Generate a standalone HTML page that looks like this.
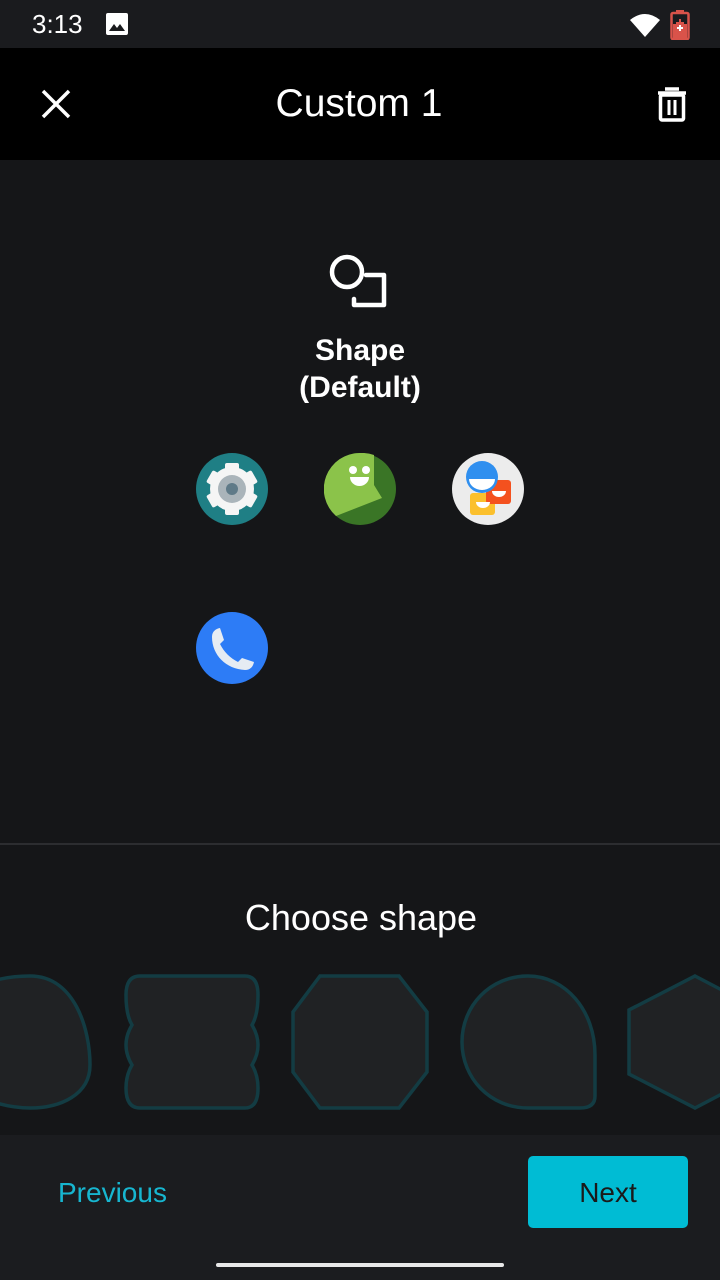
<!DOCTYPE html>
<html><head><meta charset="utf-8"><style>
html,body{margin:0;padding:0;width:720px;height:1280px;overflow:hidden;background:#151618;font-family:"Liberation Sans",sans-serif;color:#fff}
.abs{position:absolute}
</style></head><body>
<div class="abs" style="left:0;top:0;width:720px;height:48px;background:#1a1b1e"></div>
<div class="abs" style="left:32px;top:9px;font-size:26px;">3:13</div>
<svg class="abs" style="left:105px;top:12px" width="24" height="24" viewBox="0 0 24 24"><rect x="1" y="1" width="22" height="22" rx="2" fill="#fff"/><path d="M4 19 L9 12 L12 16 L15 12 L20 19Z" fill="#1a1b1e"/></svg>
<svg class="abs" style="left:628px;top:12px" width="34" height="26" viewBox="0 0 34 26"><path d="M2 8 Q17 -4 32 8 L17 25Z" fill="#fff"/></svg>
<svg class="abs" style="left:670px;top:10px" width="20" height="30" viewBox="0 0 20 30"><rect x="6" y="0" width="8" height="3" fill="#d9534a"/><rect x="1.5" y="3" width="17" height="26" rx="1.5" fill="none" stroke="#d9534a" stroke-width="2.5"/><rect x="3" y="14" width="14" height="14" fill="#d9534a"/><path d="M10 9v8M6 13h8" stroke="#d9534a" stroke-width="2"/><path d="M10 15v6M7 18h6" stroke="#fff" stroke-width="2"/></svg>
<div class="abs" style="left:0;top:48px;width:720px;height:112px;background:#000"></div>
<svg class="abs" style="left:40px;top:88px" width="32" height="32" viewBox="0 0 32 32"><path d="M3 3L29 29M29 3L3 29" stroke="#fff" stroke-width="3.5"/></svg>
<div class="abs" style="left:0;top:82px;width:718px;text-align:center;font-size:39px;">Custom 1</div>
<svg class="abs" style="left:655px;top:86px" width="34" height="36" viewBox="0 0 34 36"><path d="M10 3h14M3 7h28" stroke="#fff" stroke-width="3.5"/><rect x="5.5" y="9" width="23" height="25" rx="1.5" fill="none" stroke="#fff" stroke-width="3.5"/><path d="M14 14v15M20 14v15" stroke="#fff" stroke-width="3"/></svg>
<svg class="abs" style="left:326px;top:252px" width="64" height="58" viewBox="0 0 64 58"><circle cx="21" cy="20" r="15" fill="none" stroke="#fff" stroke-width="4.5"/><path d="M40 23h18v30h-30v-6" fill="none" stroke="#fff" stroke-width="4.5" stroke-linecap="round" stroke-linejoin="round"/></svg>
<div class="abs" style="left:0;top:332px;width:720px;text-align:center;font-size:30px;font-weight:bold;line-height:37px">Shape<br>(Default)</div>
<svg class="abs" style="left:196px;top:453px" width="72" height="72" viewBox="0 0 72 72"><circle cx="36" cy="36" r="36" fill="#1f7f85"/><g fill="#f5f5f5"><circle cx="36" cy="36" r="22"/></g><g fill="#f5f5f5">
<rect x="29" y="10" width="14" height="52" rx="2"/><rect x="29" y="10" width="14" height="52" rx="2" transform="rotate(60 36 36)"/><rect x="29" y="10" width="14" height="52" rx="2" transform="rotate(120 36 36)"/></g><circle cx="36" cy="36" r="14" fill="#aab4ba"/><circle cx="36" cy="36" r="6" fill="#5f7a88"/></svg>
<svg class="abs" style="left:324px;top:453px" width="72" height="72" viewBox="0 0 72 72"><circle cx="36" cy="36" r="36" fill="#3a7526"/><path d="M36 0 A36 36 0 0 0 12 63 L58 45 L50 32 L50 2 A36 36 0 0 0 36 0Z" fill="#8bc34a"/><circle cx="29" cy="17" r="4" fill="#fff"/><circle cx="42" cy="17" r="4" fill="#fff"/><path d="M26 24 h19 a9.5 9 0 0 1 -19 0Z" fill="#fff"/></svg>
<svg class="abs" style="left:452px;top:453px" width="72" height="72" viewBox="0 0 72 72"><circle cx="36" cy="36" r="36" fill="#ececec"/><rect x="18" y="40" width="25" height="22" rx="3" fill="#fbc02d"/><rect x="34" y="27" width="25" height="24" rx="3" fill="#f4511e"/><path d="M40 38h14a7 6 0 0 1-14 0z" fill="#fff"/><path d="M24 49h14a7 6 0 0 1-14 0z" fill="#fff"/><circle cx="30" cy="24" r="16" fill="#2f8fef"/><path d="M17 26h26a13 11 0 0 1-26 0z" fill="#fff"/></svg>
<svg class="abs" style="left:196px;top:612px" width="72" height="72" viewBox="0 0 72 72"><circle cx="36" cy="36" r="36" fill="#2d7cf6"/><path d="M16 25 C16 20 19 17 24 16 L28 28 L24 32 C28 40 34 46 42 50 L46 46 L58 50 C57 55 54 58 49 58 C30 57 16 43 16 25Z" fill="#e6ecf3"/></svg>
<div class="abs" style="left:0;top:843px;width:720px;height:2px;background:#2c2d30"></div>
<div class="abs" style="left:0;top:897px;width:722px;text-align:center;font-size:36px;">Choose shape</div>
<svg class="abs" style="left:0;top:970px" width="720" height="145" viewBox="0 0 720 145">
<g fill="#202224" stroke="#133c43" stroke-width="3.5">
<path d="M-60 72 C-60 30 -20 6 30 6 C75 6 90 60 90 95 C90 125 60 138 30 138 C-10 138 -60 115 -60 72Z"/>
<path d="M140 6 H245 Q258 6 258 25 Q258 45 252 55 Q258 65 258 75 Q258 85 252 95 Q258 105 258 118 Q258 138 245 138 H140 Q126 138 126 118 Q126 105 132 95 Q126 85 126 75 Q126 65 132 55 Q126 45 126 25 Q126 6 140 6Z"/>
<path d="M320 6 H399 L427 42 V102 L399 138 H320 L293 102 V42Z"/>
<path d="M528 6 C565 6 595 40 595 85 V126 Q595 138 580 138 H528 C490 138 462 108 462 72 C462 36 490 6 528 6Z"/>
<path d="M695 6 L760 40 V104 L695 138 L629 104 V40Z"/>
</g></svg>
<div class="abs" style="left:0;top:1135px;width:720px;height:145px;background:#1b1c1f"></div>
<div class="abs" style="left:58px;top:1177px;font-size:28px;color:#17b6d0">Previous</div>
<div class="abs" style="left:528px;top:1156px;width:160px;height:72px;background:#00bcd4;border-radius:5px;color:#1a1a1a;font-size:28px;text-align:center;line-height:74px">Next</div>
<div class="abs" style="left:216px;top:1263px;width:288px;height:4px;border-radius:2px;background:#e8e8e8"></div>
</body></html>
